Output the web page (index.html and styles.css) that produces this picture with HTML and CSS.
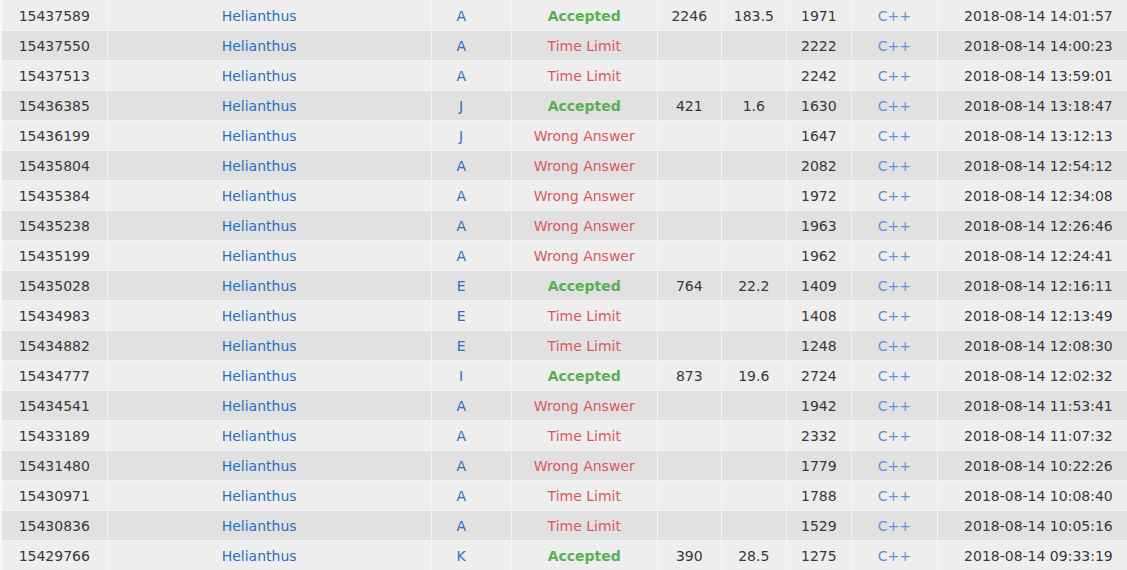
FILE: index.html
```html
<!DOCTYPE html>
<html>
<head>
<meta charset="utf-8">
<link rel="stylesheet" href="styles.css">
</head>
<body>
<table class="status">
<colgroup>
<col class="c-id"><col class="c-user"><col class="c-prob"><col class="c-res"><col class="c-mem"><col class="c-time"><col class="c-len"><col class="c-lang"><col class="c-date">
</colgroup>
<tbody>
<tr><td>15437589</td><td class="user">Helianthus</td><td class="prob">A</td><td class="ac">Accepted</td><td>2246</td><td>183.5</td><td>1971</td><td class="lang">C++</td><td>2018-08-14 14:01:57</td></tr>
<tr><td>15437550</td><td class="user">Helianthus</td><td class="prob">A</td><td class="bad">Time Limit</td><td></td><td></td><td>2222</td><td class="lang">C++</td><td>2018-08-14 14:00:23</td></tr>
<tr><td>15437513</td><td class="user">Helianthus</td><td class="prob">A</td><td class="bad">Time Limit</td><td></td><td></td><td>2242</td><td class="lang">C++</td><td>2018-08-14 13:59:01</td></tr>
<tr><td>15436385</td><td class="user">Helianthus</td><td class="prob">J</td><td class="ac">Accepted</td><td>421</td><td>1.6</td><td>1630</td><td class="lang">C++</td><td>2018-08-14 13:18:47</td></tr>
<tr><td>15436199</td><td class="user">Helianthus</td><td class="prob">J</td><td class="bad">Wrong Answer</td><td></td><td></td><td>1647</td><td class="lang">C++</td><td>2018-08-14 13:12:13</td></tr>
<tr><td>15435804</td><td class="user">Helianthus</td><td class="prob">A</td><td class="bad">Wrong Answer</td><td></td><td></td><td>2082</td><td class="lang">C++</td><td>2018-08-14 12:54:12</td></tr>
<tr><td>15435384</td><td class="user">Helianthus</td><td class="prob">A</td><td class="bad">Wrong Answer</td><td></td><td></td><td>1972</td><td class="lang">C++</td><td>2018-08-14 12:34:08</td></tr>
<tr><td>15435238</td><td class="user">Helianthus</td><td class="prob">A</td><td class="bad">Wrong Answer</td><td></td><td></td><td>1963</td><td class="lang">C++</td><td>2018-08-14 12:26:46</td></tr>
<tr><td>15435199</td><td class="user">Helianthus</td><td class="prob">A</td><td class="bad">Wrong Answer</td><td></td><td></td><td>1962</td><td class="lang">C++</td><td>2018-08-14 12:24:41</td></tr>
<tr><td>15435028</td><td class="user">Helianthus</td><td class="prob">E</td><td class="ac">Accepted</td><td>764</td><td>22.2</td><td>1409</td><td class="lang">C++</td><td>2018-08-14 12:16:11</td></tr>
<tr><td>15434983</td><td class="user">Helianthus</td><td class="prob">E</td><td class="bad">Time Limit</td><td></td><td></td><td>1408</td><td class="lang">C++</td><td>2018-08-14 12:13:49</td></tr>
<tr><td>15434882</td><td class="user">Helianthus</td><td class="prob">E</td><td class="bad">Time Limit</td><td></td><td></td><td>1248</td><td class="lang">C++</td><td>2018-08-14 12:08:30</td></tr>
<tr><td>15434777</td><td class="user">Helianthus</td><td class="prob">I</td><td class="ac">Accepted</td><td>873</td><td>19.6</td><td>2724</td><td class="lang">C++</td><td>2018-08-14 12:02:32</td></tr>
<tr><td>15434541</td><td class="user">Helianthus</td><td class="prob">A</td><td class="bad">Wrong Answer</td><td></td><td></td><td>1942</td><td class="lang">C++</td><td>2018-08-14 11:53:41</td></tr>
<tr><td>15433189</td><td class="user">Helianthus</td><td class="prob">A</td><td class="bad">Time Limit</td><td></td><td></td><td>2332</td><td class="lang">C++</td><td>2018-08-14 11:07:32</td></tr>
<tr><td>15431480</td><td class="user">Helianthus</td><td class="prob">A</td><td class="bad">Wrong Answer</td><td></td><td></td><td>1779</td><td class="lang">C++</td><td>2018-08-14 10:22:26</td></tr>
<tr><td>15430971</td><td class="user">Helianthus</td><td class="prob">A</td><td class="bad">Time Limit</td><td></td><td></td><td>1788</td><td class="lang">C++</td><td>2018-08-14 10:08:40</td></tr>
<tr><td>15430836</td><td class="user">Helianthus</td><td class="prob">A</td><td class="bad">Time Limit</td><td></td><td></td><td>1529</td><td class="lang">C++</td><td>2018-08-14 10:05:16</td></tr>
<tr><td>15429766</td><td class="user">Helianthus</td><td class="prob">K</td><td class="ac">Accepted</td><td>390</td><td>28.5</td><td>1275</td><td class="lang">C++</td><td>2018-08-14 09:33:19</td></tr>
</tbody>
</table>
</body>
</html>
```

FILE: styles.css
```css
html {
  overflow: hidden;
}
body {
  margin: 0;
  background: #f2f2f2;
  font-family: "DejaVu Sans", Verdana, sans-serif;
}
.status {
  border-collapse: collapse;
  table-layout: fixed;
  width: 1140px;
  font-size: 14px;
  color: #383838;
  border-left: 2px solid #f7f7f7;
}
.c-id { width: 106px; }
.c-user { width: 324px; }
.c-prob { width: 80px; }
.c-res { width: 146px; }
.c-mem { width: 64px; }
.c-time { width: 65px; }
.c-len { width: 65px; }
.c-lang { width: 86px; }
.c-date { width: 202px; }
.status td {
  height: 29px;
  padding: 0;
  text-align: center;
  vertical-align: middle;
  border: 1px solid #f4f4f4;
  white-space: nowrap;
}
.status tr:first-child td {
  border-top: 0;
  height: 29px;
  padding-top: 1px;
}
.status tr:nth-child(odd) td {
  background: #eeeeee;
}
.status tr:nth-child(even) td {
  background: #e1e1e1;
}
.status td.user,
.status td.prob {
  padding-right: 20px;
  color: #2a6fc2;
}
.status td.ac {
  color: #5cae56;
  font-weight: bold;
}
.status td.bad {
  color: #d9585e;
}
.status td.lang {
  color: #6a8fd8;
}
```
